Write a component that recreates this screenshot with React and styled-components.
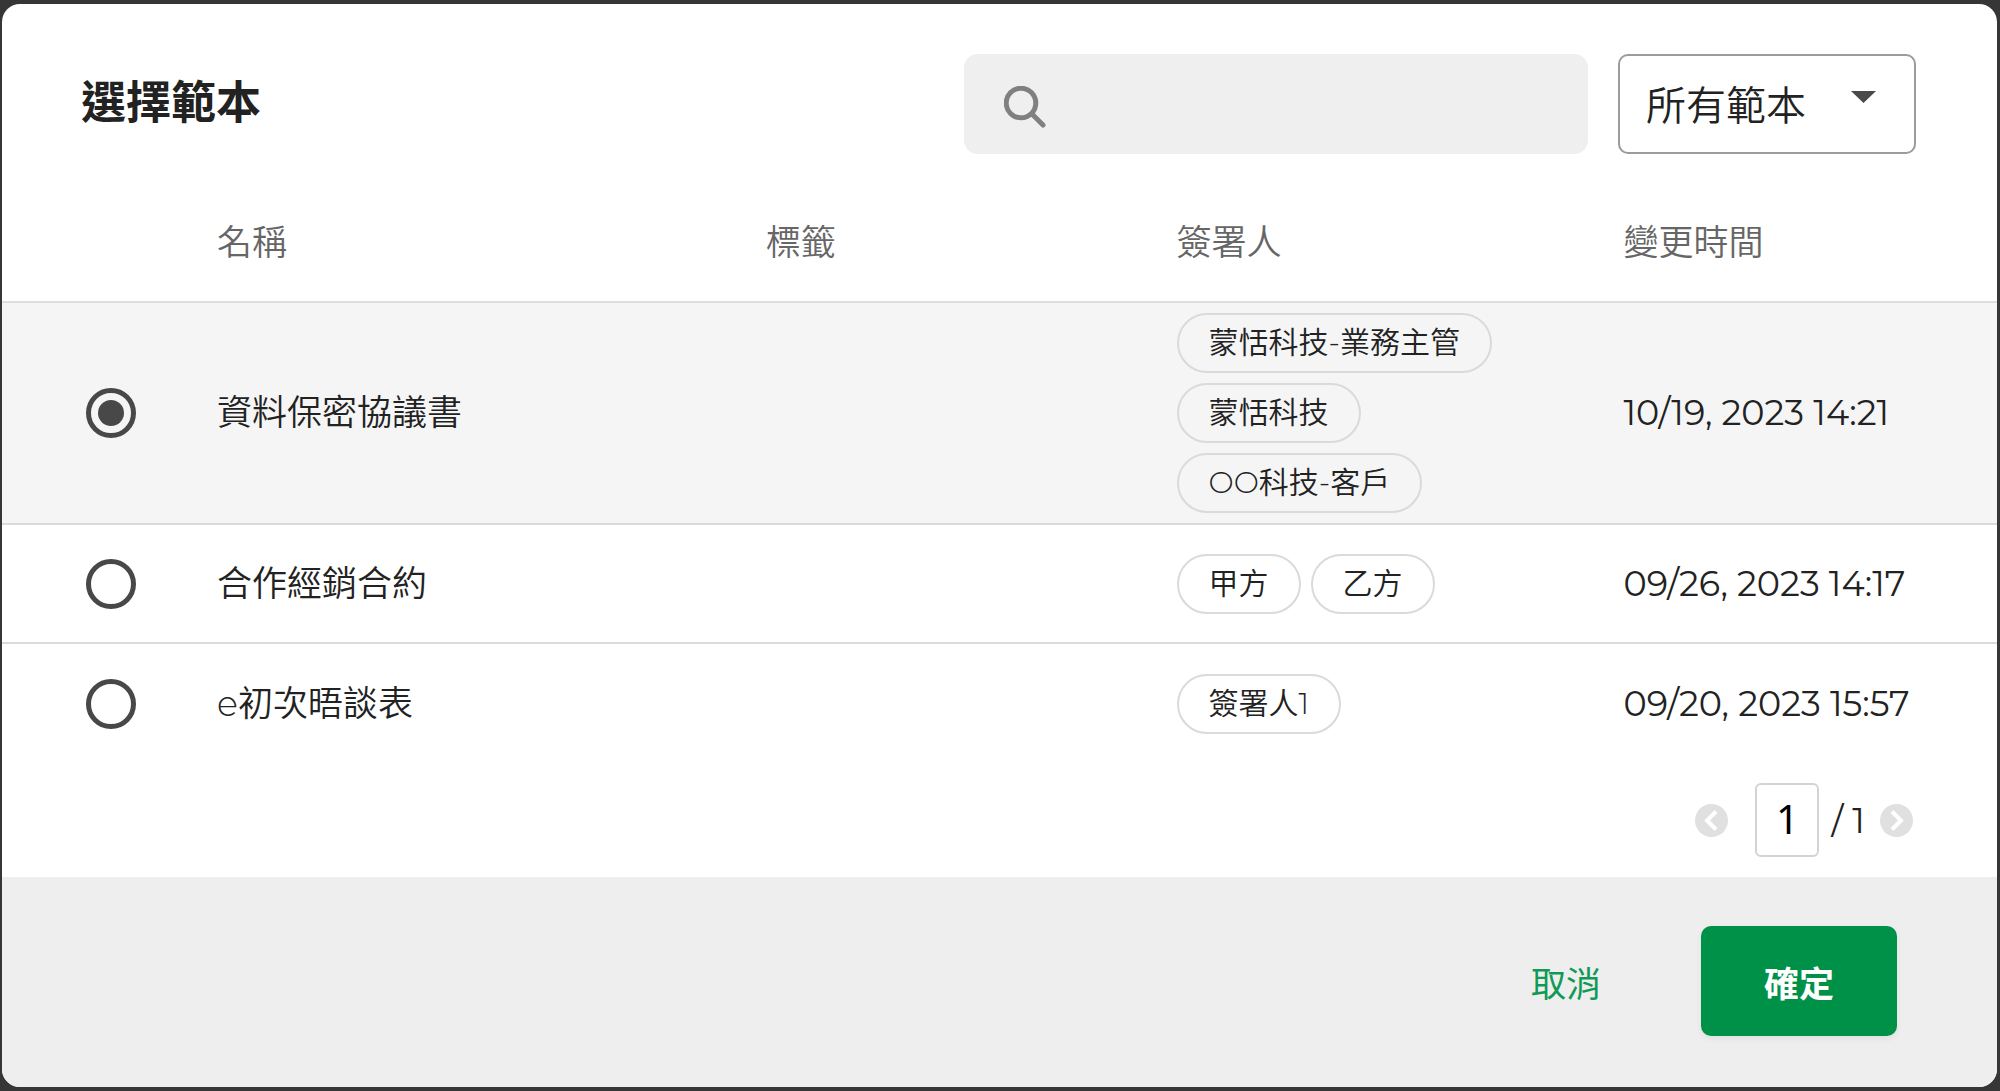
import React, { useState } from 'react';
import styled, { createGlobalStyle } from 'styled-components';

const GlobalStyle = createGlobalStyle`
  * {
    box-sizing: border-box;
  }

  body {
    margin: 0;
    background-color: #363636;
    color: #222;
    font-family: Montserrat, Lato, "Noto Sans CJK TC", sans-serif;
    font-weight: 350;
  }

  button, input, select {
    font-family: inherit;
    font-weight: inherit;
    color: inherit;
  }
`;

const Backdrop = styled.div`
  display: flex;
  min-height: 100vh;
  padding: 4px 3px 4px 2px;
`;

const Dialog = styled.form`
  display: flex;
  flex-direction: column;
  flex: 1;
  border-radius: 18px;
  background-color: #fff;
  overflow: hidden;
`;

const Header = styled.header`
  display: flex;
  align-items: center;
  padding: 50px 81px 0 79px;
`;

const Title = styled.h1`
  flex: 1;
  margin: 0;
  padding-bottom: 2px;
  font-size: 45px;
  line-height: 64px;
  font-weight: 600;
`;

const SearchBox = styled.label`
  display: flex;
  align-items: center;
  width: 624px;
  height: 100px;
  margin-right: 30px;
  padding: 6px 40px 0;
  border-radius: 14px;
  background-color: #efefef;
  color: #808080;
`;

const SearchInput = styled.input`
  flex: 1;
  min-width: 0;
  margin-left: 16px;
  border: 0;
  outline: 0;
  background: transparent;
  font-size: 35px;
`;

const SelectBox = styled.div`
  position: relative;
  width: 298px;
`;

const Select = styled.select`
  display: block;
  width: 100%;
  height: 100px;
  padding: 2px 26px 0;
  border: 2px solid #9b9b9b;
  border-radius: 10px;
  appearance: none;
  background-color: #fff;
  font-size: 40px;
`;

const Caret = styled.svg`
  position: absolute;
  top: 37px;
  right: 40px;
  pointer-events: none;
`;

const Table = styled.table`
  width: 100%;
  border-collapse: separate;
  border-spacing: 0;
  table-layout: fixed;
  font-size: 35px;
  line-height: 48px;
  text-align: left;
  white-space: nowrap;
`;

const Col = styled.col`
  width: ${props => props.$width};
`;

const HeadCell = styled.th`
  padding: 65px 0 34px;
  border-bottom: 2px solid #dedede;
  color: #666;
  font-weight: 350;
`;

const Row = styled.tr`
  background-color: ${props => props.$selected ? '#f5f5f5' : '#fff'};

  &:not(:last-child) td {
    border-bottom: 2px solid #dadada;
  }
`;

const Cell = styled.td`
  height: 119px;
  padding: 10px 0;
  vertical-align: middle;
`;

const RadioCell = styled(Cell)`
  padding-left: 84px;
`;

const TimeCell = styled(Cell)`
  font-weight: 400;
`;

const Radio = styled.input`
  display: flex;
  align-items: center;
  justify-content: center;
  width: 50px;
  height: 50px;
  margin: 0;
  border: 5px solid #484848;
  border-radius: 50%;
  appearance: none;

  &:checked::before {
    content: '';
    width: 26px;
    height: 26px;
    border-radius: 50%;
    background-color: #484848;
  }
`;

const Signers = styled.div`
  display: flex;
  flex-wrap: wrap;
  gap: 10px;
  max-width: 400px;
`;

const Chip = styled.span`
  padding: 0 30px;
  border: 2px solid #dadada;
  border-radius: 30px;
  font-size: 30px;
  line-height: 56px;
`;

const Pagination = styled.nav`
  display: flex;
  align-items: center;
  justify-content: flex-end;
  padding: 20px 84px 20px;
  font-size: 35px;
`;

const PageButton = styled.button`
  display: flex;
  padding: 0;
  border: 0;
  background: transparent;
`;

const PageInput = styled.input`
  width: 64px;
  height: 74px;
  margin: 0 12px 0 27px;
  padding: 0 0 4px;
  border: 2px solid #d3d3d3;
  border-radius: 6px;
  color: #000;
  font-family: "Noto Sans", sans-serif;
  font-size: 40px;
  font-weight: 400;
  text-align: center;
`;

const PageTotal = styled.span`
  margin-right: 15px;
  font-weight: 400;
`;

const Footer = styled.footer`
  display: flex;
  flex: 1;
  align-items: flex-start;
  justify-content: flex-end;
  gap: 50px;
  padding: 49px 100px;
  background-color: #eee;
`;

const Button = styled.button`
  height: 110px;
  padding: 0 ${props => props.$primary ? 63 : 50}px;
  border: 0;
  border-radius: 10px;
  background-color: ${props => props.$primary ? '#009148' : 'transparent'};
  box-shadow: ${props => props.$primary ? '0 3px 6px rgba(0, 0, 0, 0.06)' : 'none'};
  color: ${props => props.$primary ? '#fff' : '#119a56'};
  font-size: 35px;
  font-weight: ${props => props.$primary ? 600 : 400};
`;

const templates = [
  { id: 1, name: '資料保密協議書', signers: ['蒙恬科技-業務主管', '蒙恬科技', 'OO科技-客戶'], time: '10/19, 2023 14:21' },
  { id: 2, name: '合作經銷合約', signers: ['甲方', '乙方'], time: '09/26, 2023 14:17' },
  { id: 3, name: 'e初次晤談表', signers: ['簽署人1'], time: '09/20, 2023 15:57' },
];

const SearchIcon = () => (
  <svg width="42" height="42" viewBox="0 0 42 42" fill="none" stroke="currentColor" strokeWidth="5">
    <circle cx="17" cy="17" r="14.8" />
    <path d="M28 28l11 11" strokeLinecap="round" />
  </svg>
);

const ArrowIcon = ({ d }) => (
  <svg width="33" height="33" viewBox="0 0 33 33" fill="none">
    <circle cx="16.5" cy="16.5" r="16.5" fill="#e0e0e0" />
    <path d={d} stroke="#fff" strokeWidth="4" />
  </svg>
);

export default function App() {
  const [selected, setSelected] = useState(1);

  return (
    <Backdrop>
      <GlobalStyle />
      <Dialog onSubmit={e => e.preventDefault()}>
        <Header>
          <Title>選擇範本</Title>
          <SearchBox>
            <SearchIcon />
            <SearchInput type="text" aria-label="搜尋" />
          </SearchBox>
          <SelectBox>
            <Select aria-label="範本">
              <option>所有範本</option>
            </Select>
            <Caret width="25" height="12" viewBox="0 0 25 12">
              <path d="M0 0h25L12.5 12z" fill="#4a4a4a" />
            </Caret>
          </SelectBox>
        </Header>

        <Table>
          <colgroup>
            <Col $width="215px" />
            <Col $width="27.5%" />
            <Col $width="20.6%" />
            <Col $width="22.4%" />
            <Col />
          </colgroup>
          <thead>
            <tr>
              <HeadCell />
              <HeadCell>名稱</HeadCell>
              <HeadCell>標籤</HeadCell>
              <HeadCell>簽署人</HeadCell>
              <HeadCell>變更時間</HeadCell>
            </tr>
          </thead>
          <tbody>
            {templates.map(item => (
              <Row key={item.id} $selected={item.id === selected}>
                <RadioCell>
                  <Radio
                    type="radio"
                    name="template"
                    id={`template-${item.id}`}
                    checked={item.id === selected}
                    onChange={() => setSelected(item.id)}
                  />
                </RadioCell>
                <Cell>
                  <label htmlFor={`template-${item.id}`}>{item.name}</label>
                </Cell>
                <Cell />
                <Cell>
                  <Signers>
                    {item.signers.map(signer => <Chip key={signer}>{signer}</Chip>)}
                  </Signers>
                </Cell>
                <TimeCell>{item.time}</TimeCell>
              </Row>
            ))}
          </tbody>
        </Table>

        <Pagination>
          <PageButton type="button" aria-label="上一頁">
            <ArrowIcon d="M21 7.5l-9 9 9 9" />
          </PageButton>
          <PageInput type="text" defaultValue="1" aria-label="頁碼" />
          <PageTotal>/ 1</PageTotal>
          <PageButton type="button" aria-label="下一頁">
            <ArrowIcon d="M12 7.5l9 9-9 9" />
          </PageButton>
        </Pagination>

        <Footer>
          <Button type="button">取消</Button>
          <Button type="submit" $primary>確定</Button>
        </Footer>
      </Dialog>
    </Backdrop>
  );
}
